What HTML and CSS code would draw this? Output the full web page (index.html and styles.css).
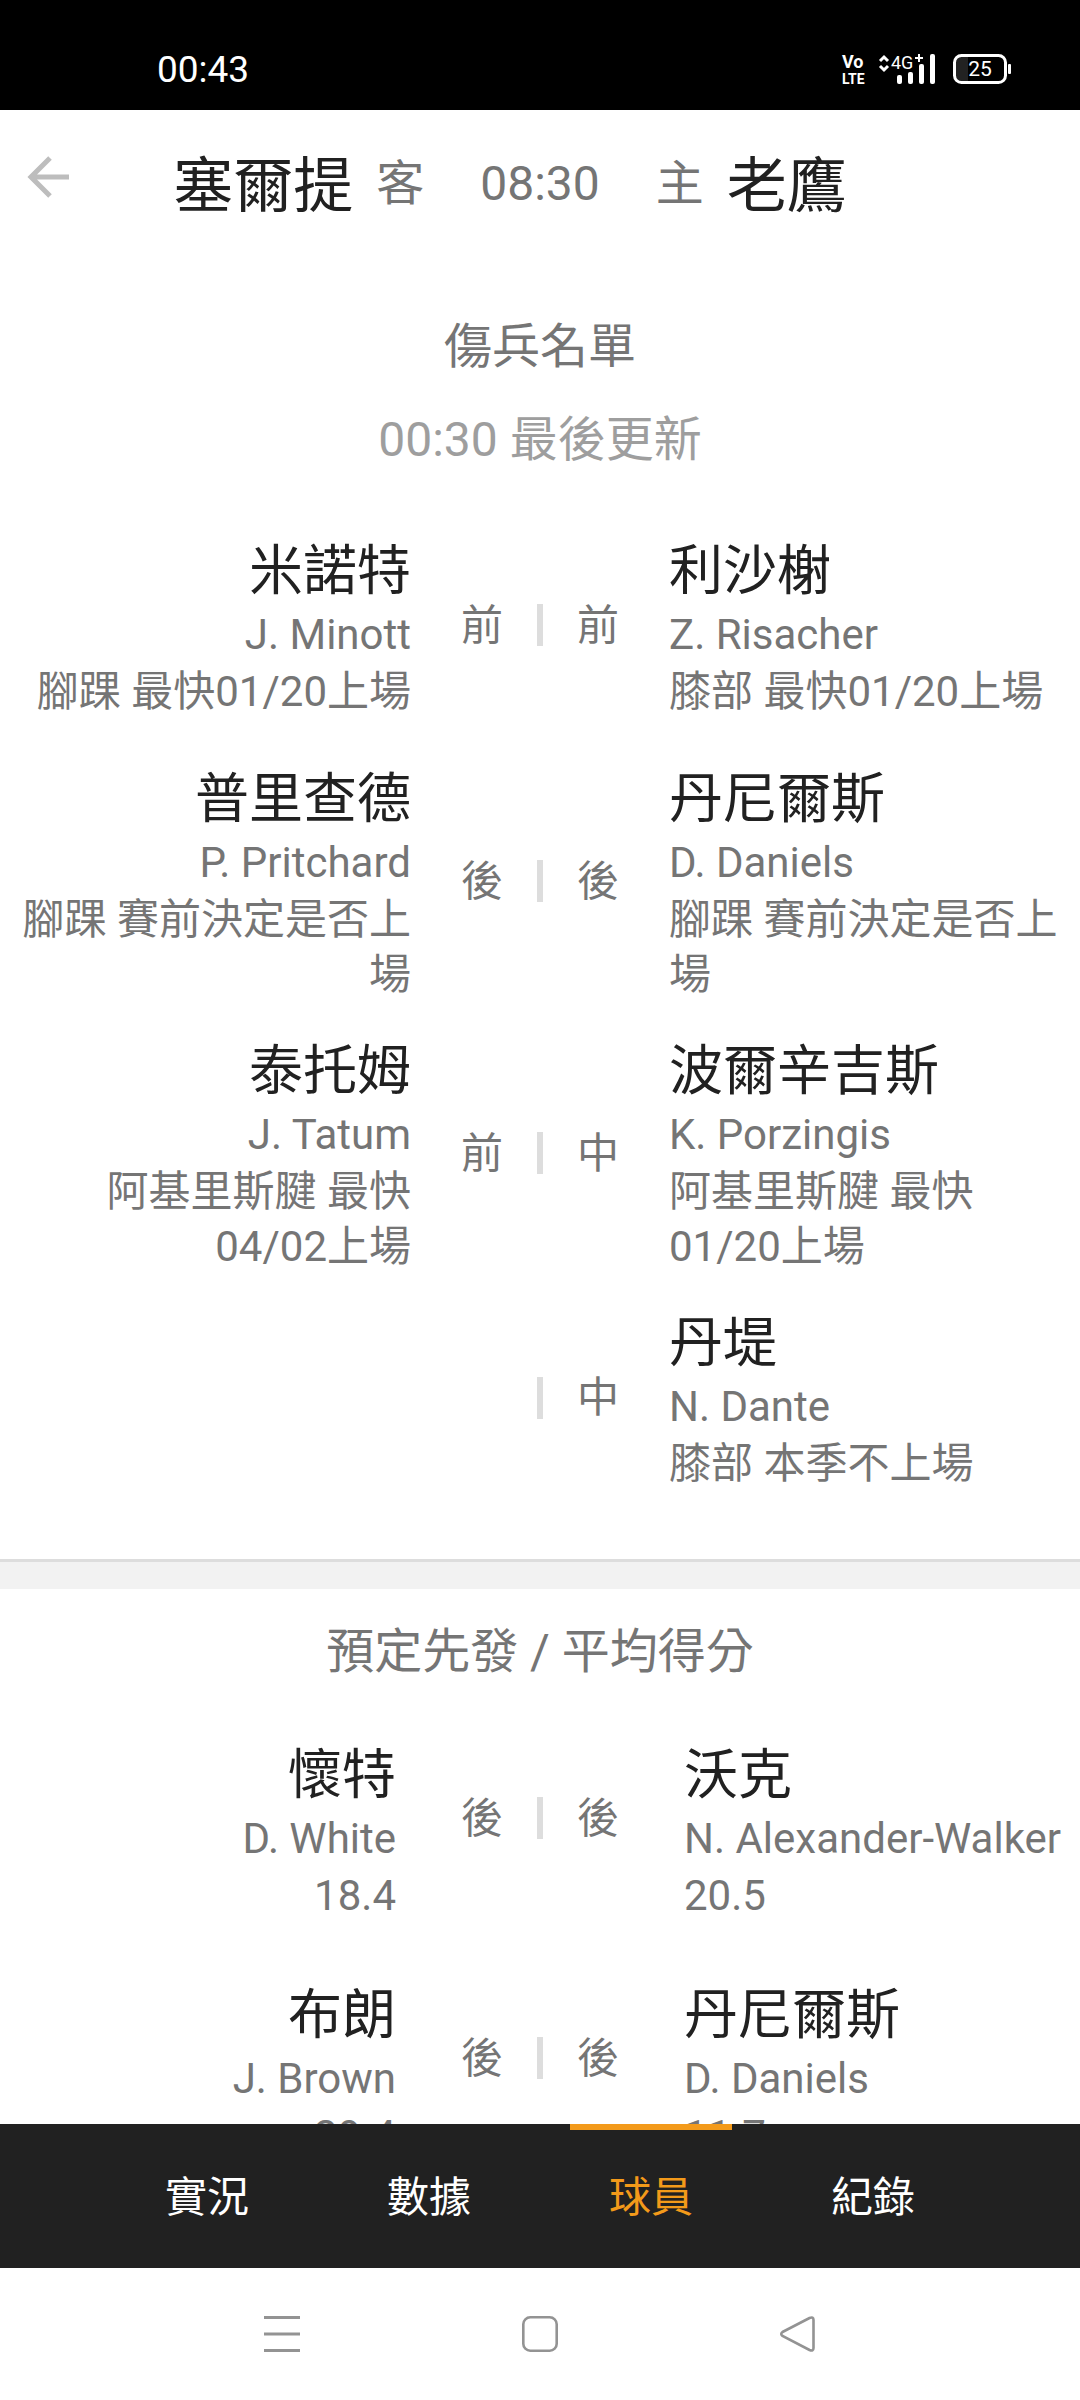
FILE: index.html
```
<!DOCTYPE html>
<html lang="zh-Hant">
<head>
	<meta charset="UTF-8">
	<meta name="viewport" content="width=device-width">
	<title>塞爾提 - 老鷹</title>
	<link rel="stylesheet" href="styles.css">
</head>
<body>
	<div class="status">
		<span class="clock">00:43</span>
		<svg class="status-icons" width="170" height="32" viewBox="842 53 170 32">
			<text class="vo" x="842" y="68">Vo</text>
			<text class="lte" x="842" y="84">LTE</text>
			<path d="M880 61l4-4 4 4M880 66l4 4 4-4" fill="none" stroke="#fff" stroke-width="3"/>
			<text class="net" x="891" y="69">4G</text>
			<path d="M915 58h8M919 54v8" stroke="#fff" stroke-width="2"/>
			<g fill="#fff">
				<rect x="897" y="75" width="5" height="9" rx="2"/>
				<rect x="908" y="72" width="5" height="12" rx="2"/>
				<rect x="919" y="64" width="5" height="20" rx="2"/>
				<rect x="930" y="54" width="5" height="30" rx="2"/>
			</g>
			<rect x="956" y="57" width="12" height="24" fill="#222"/>
			<rect x="954.5" y="55.5" width="51" height="27" rx="7" fill="none" stroke="#fff" stroke-width="3"/>
			<rect x="1008" y="64" width="3" height="10" rx="1" fill="#fff"/>
			<text class="level" x="980" y="76" text-anchor="middle">25</text>
		</svg>
	</div>

	<header class="header">
		<div class="side away">
			<button class="back" aria-label="返回">
				<svg width="42" height="42" viewBox="0 0 42 42" fill="none" stroke="#bdbdbd" stroke-width="5">
					<path d="M42 21H4M23 2L4 21l19 19"/>
				</svg>
			</button>
			<h1 class="team">塞爾提</h1>
			<span class="venue">客</span>
		</div>
		<time class="start">08:30</time>
		<div class="side">
			<span class="venue">主</span>
			<h1 class="team">老鷹</h1>
		</div>
	</header>

	<main class="content">
		<section class="injuries">
			<h2 class="title">傷兵名單</h2>
			<p class="updated">00:30 最後更新</p>

			<div class="row">
				<div class="player left">
					<h3>米諾特</h3>
					<p class="en">J. Minott</p>
					<p>腳踝 最快01/20上場</p>
				</div>
				<div class="pos"><span>前</span><i></i><span>前</span></div>
				<div class="player">
					<h3>利沙榭</h3>
					<p class="en">Z. Risacher</p>
					<p>膝部 最快01/20上場</p>
				</div>
			</div>

			<div class="row">
				<div class="player left">
					<h3>普里查德</h3>
					<p class="en">P. Pritchard</p>
					<p>腳踝 賽前決定是否上場</p>
				</div>
				<div class="pos"><span>後</span><i></i><span>後</span></div>
				<div class="player">
					<h3>丹尼爾斯</h3>
					<p class="en">D. Daniels</p>
					<p>腳踝 賽前決定是否上場</p>
				</div>
			</div>

			<div class="row">
				<div class="player left">
					<h3>泰托姆</h3>
					<p class="en">J. Tatum</p>
					<p>阿基里斯腱 最快04/02上場</p>
				</div>
				<div class="pos"><span>前</span><i></i><span>中</span></div>
				<div class="player">
					<h3>波爾辛吉斯</h3>
					<p class="en">K. Porzingis</p>
					<p>阿基里斯腱 最快01/20上場</p>
				</div>
			</div>

			<div class="row single">
				<div class="player left"></div>
				<div class="pos"><span></span><i></i><span>中</span></div>
				<div class="player">
					<h3>丹堤</h3>
					<p class="en">N. Dante</p>
					<p>膝部 本季不上場</p>
				</div>
			</div>
		</section>

		<section class="starters">
			<h2 class="title">預定先發 / 平均得分</h2>

			<div class="row">
				<div class="player left">
					<h3>懷特</h3>
					<p class="en">D. White</p>
					<p>18.4</p>
				</div>
				<div class="pos"><span>後</span><i></i><span>後</span></div>
				<div class="player">
					<h3>沃克</h3>
					<p class="en">N. Alexander-Walker</p>
					<p>20.5</p>
				</div>
			</div>

			<div class="row">
				<div class="player left">
					<h3>布朗</h3>
					<p class="en">J. Brown</p>
					<p>29.4</p>
				</div>
				<div class="pos"><span>後</span><i></i><span>後</span></div>
				<div class="player">
					<h3>丹尼爾斯</h3>
					<p class="en">D. Daniels</p>
					<p>11.7</p>
				</div>
			</div>
		</section>
	</main>

	<nav class="tabs">
		<a href="#live">實況</a>
		<a href="#stats">數據</a>
		<a href="#players" class="active">球員</a>
		<a href="#record">紀錄</a>
	</nav>

	<div class="system">
		<button aria-label="選單">
			<svg width="36" height="36" viewBox="0 0 36 36" stroke="#939393" stroke-width="3">
				<path d="M0 1.5h36M0 18h36M0 34.5h36"/>
			</svg>
		</button>
		<button aria-label="主畫面">
			<svg width="36" height="36" viewBox="0 0 36 36" fill="none" stroke="#939393" stroke-width="2.6">
				<rect x="1.3" y="1.3" width="33.4" height="33.4" rx="7"/>
			</svg>
		</button>
		<button aria-label="上一頁">
			<svg width="36" height="36" viewBox="0 0 36 36" fill="none" stroke="#939393" stroke-width="2.6">
				<path d="M2.5 16L29.5 2Q33.5 .5 33.5 4V32Q33.5 35.500 29.500 34L2.500 20Q0 18 2.500 16Z"/>
			</svg>
		</button>
	</div>
</body>
</html>
```

FILE: styles.css
```
* {
	box-sizing: border-box;
	margin: 0;
	padding: 0;
}

body {
	display: flex;
	flex-direction: column;
	height: 100vh;
	background: #fff;
	color: #757575;
	font-family: Roboto, "Noto Sans CJK TC", sans-serif;
	font-size: 42px;
	line-height: 55px;
}

h1, h2, h3 {
	font-weight: 400;
}

button {
	border: 0;
	background: none;
}

svg {
	display: block;
	overflow: visible;
}

/* status bar */
.status {
	display: flex;
	flex: none;
	align-items: center;
	justify-content: space-between;
	height: 110px;
	padding: 28px 68px 0 157px;
	background: #000;
	color: #fff;
}

.clock {
	font-size: 37px;
}

.status-icons text {
	fill: #fff;
}

.vo, .lte {
	font-size: 18px;
	font-weight: 700;
}

.lte {
	font-size: 14px;
}

.net {
	font-size: 18px;
}

.level {
	font-size: 21px;
}

/* match header */
.header {
	display: grid;
	flex: none;
	grid-template-columns: 1fr auto 1fr;
	column-gap: 56px;
	align-items: center;
	height: 147px;
	font-size: 48px;
}

.side {
	display: flex;
	align-items: center;
	gap: 23px;
}

.back {
	margin: 0 auto 14px 27px;
}

.team {
	padding-top: 5px;
	color: #212121;
	font-size: 60px;
}

/* player lists */
.content {
	flex: 1;
	min-height: 0;
	overflow: hidden;
}

.injuries {
	padding: 62px 0 54px;
	border-bottom: 3px solid #ddd;
}

.title {
	font-size: 48px;
	line-height: 56px;
	text-align: center;
}

.updated {
	margin: 37px 0;
	color: #9e9e9e;
	font-size: 48px;
	text-align: center;
}

.row {
	display: grid;
	grid-template-columns: 1fr auto 1fr;
	column-gap: 50px;
	align-items: center;
	min-height: 240px;
	padding: 16px 0 14px;
}

.single {
	min-height: 0;
}

.player {
	padding-top: 6px;
}

.left {
	text-align: right;
}

.player h3 {
	color: #212121;
	font-size: 54px;
	line-height: 68px;
}

.player .en {
	line-height: 58px;
	white-space: nowrap;
}

.pos {
	display: flex;
	align-items: center;
	gap: 34px;
}

.pos span {
	width: 42px;
}

.pos i {
	width: 6px;
	height: 42px;
	background: #ddd;
}

.starters {
	padding-top: 35px;
	border-top: 27px solid #f2f2f2;
}

.starters .title {
	margin-bottom: 17px;
}

.starters .row {
	column-gap: 65px;
}

.starters .player {
	padding-top: 28px;
}

/* bottom tabs */
.tabs {
	display: flex;
	flex: none;
	justify-content: center;
	gap: 60px;
	background: #212121;
}

.tabs a {
	width: 162px;
	height: 144px;
	border-top: 6px solid transparent;
	color: #fff;
	line-height: 136px;
	text-align: center;
	text-decoration: none;
}

.tabs .active {
	border-top-color: #f39a1a;
	color: #f39a1a;
}

.system {
	display: flex;
	flex: none;
	align-items: center;
	justify-content: center;
	gap: 222px;
	height: 132px;
}
```
